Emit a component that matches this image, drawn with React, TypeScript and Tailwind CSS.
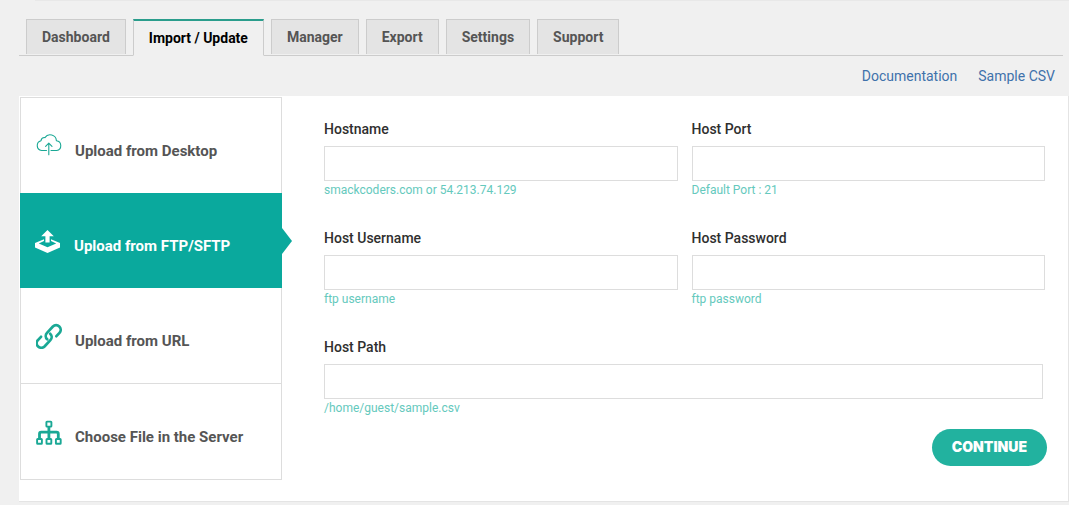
import React, { useState } from "react";

const tabs = ["Dashboard", "Import / Update", "Manager", "Export", "Settings", "Support"];

function CloudIcon() {
  return (
    <svg viewBox="0 0 26 26" className="size-[26px]" fill="none" stroke="currentColor" strokeWidth="1.1" strokeLinecap="round" strokeLinejoin="round" aria-hidden="true">
      <path d="M10.5 17.5H5.6A5 5 0 0 1 5 7.7a3.6 3.6 0 0 1 3.9-3.1 6.3 6.3 0 0 1 11.5 3.2 4.9 4.9 0 0 1 .3 9.7H15" />
      <path d="M12.8 21.7V10.4M9.6 13.4l3.2-3.2 3.2 3.2" />
    </svg>
  );
}

function TrayIcon() {
  return (
    <svg viewBox="0 0 26 26" className="size-[26px]" fill="currentColor" aria-hidden="true">
      <path d="M12.5 2 18.8 8.2H14.6V14.6H10.4V8.2H6.2Z" />
      <path d="M9 11.2V13L3.8 15.4 12.5 19.2 21.2 15.4 16 13V11.2L25 15V19.6L12.5 25 0 19.6V15Z" />
    </svg>
  );
}

function ChainIcon() {
  return (
    <svg viewBox="0 0 26 26" className="size-[26px]" fill="none" stroke="currentColor" strokeWidth="2.7" strokeLinecap="round" strokeLinejoin="round" aria-hidden="true">
      <path d="M11.2 16.3A4.6 4.6 0 0 1 11 9.8L16.9 3.5A4.6 4.6 0 0 1 23.5 9.9L20.4 13.2" />
      <path d="M14.2 10.7A4.6 4.6 0 0 1 14.4 17.2L8.5 23.5A4.6 4.6 0 0 1 1.9 17.1L5 13.8" />
    </svg>
  );
}

function TreeIcon() {
  return (
    <svg viewBox="0 0 26 26" className="size-[26px]" fill="none" stroke="currentColor" strokeWidth="1.9" strokeLinejoin="round" aria-hidden="true">
      <rect x="10.4" y="2.6" width="5" height="5" rx=".6" />
      <rect x="1.1" y="20" width="4.8" height="4.8" rx=".6" />
      <rect x="10.5" y="20" width="4.8" height="4.8" rx=".6" />
      <rect x="19.9" y="20" width="4.8" height="4.8" rx=".6" />
      <path strokeWidth="2.8" d="M12.9 8V19.5M3.5 19.5V14.9Q3.5 13.2 5.2 13.2H20.6Q22.3 13.2 22.3 14.9V19.5" />
    </svg>
  );
}

const sources = [
  { label: "Upload from Desktop", Icon: CloudIcon },
  { label: "Upload from FTP/SFTP", Icon: TrayIcon },
  { label: "Upload from URL", Icon: ChainIcon },
  { label: "Choose File in the Server", Icon: TreeIcon },
];

type FieldProps = { id: string; label: string; hint: string; type?: string };

function Field({ id, label, hint, type = "text" }: FieldProps) {
  return (
    <div className="flex min-w-0 flex-col">
      <label htmlFor={id} className="mb-[7px] text-sm leading-5 font-medium text-[#2f2f2f]">{label}</label>
      <input id={id} type={type} aria-describedby={`${id}-hint`} className="h-[35px] w-full border border-[#dddddd] bg-white px-3 text-sm outline-none focus:border-[#0aa99d]" />
      <p id={`${id}-hint`} className="text-xs leading-[18px] text-[#65c9bd]">{hint}</p>
    </div>
  );
}

export default function App() {
  const [tab, setTab] = useState(1);
  const [source, setSource] = useState(1);

  return (
    <div className="min-h-screen bg-[#f0f0f0] pl-[19px] font-['Roboto',sans-serif]">
      <div className="ml-4 border-t border-[#e8e8e8]" />
      <nav className="mr-1.5 flex items-end gap-[7px] border-b border-[#cccccc] pt-[18px] pl-[7px]">
        {tabs.map((name, i) => (
          <button
            key={name}
            type="button"
            onClick={() => setTab(i)}
            className={
              i === tab
                ? "-mb-px h-[37px] border border-t-2 border-[#cccccc] border-t-[#2a9d8c] border-b-[#f0f0f0] bg-[#f0f0f0] px-[15px] text-sm font-bold text-black"
                : "mb-px h-[35px] border border-b-0 border-[#cccccc] bg-[#e4e4e4] px-[15px] text-sm font-bold text-[#555555]"
            }
          >
            {name}
          </button>
        ))}
      </nav>
      <div className="flex justify-end gap-[21px] py-2.5 pr-3.5 text-sm leading-5 text-[#3f72ab]">
        <a href="#documentation">Documentation</a>
        <a href="#sample-csv">Sample CSV</a>
      </div>
      <main className="flex border-r border-b border-[#e4e4e4] bg-white pt-px pb-[21px] pl-px">
        <aside className="flex w-[262px] shrink-0 flex-col border border-[#dddddd]">
          {sources.map(({ label, Icon }, i) => (
            <button
              key={label}
              type="button"
              onClick={() => setSource(i)}
              className={
                i === source
                  ? "relative -mx-px flex h-[95px] items-center gap-[13px] bg-[#0aa99d] pr-2 pl-[15px] text-left text-[15px] leading-5 font-bold text-white"
                  : "relative flex h-[95px] items-center gap-[13px] border-[#dddddd] pr-2 pl-[15px] text-left text-[15px] leading-5 font-bold text-[#555555] not-first:not-last:h-24 not-first:not-last:border-b"
              }
            >
              <span className={i === source ? "text-white" : "text-[#1aa895]"}><Icon /></span>
              <span className="pt-2.5">{label}</span>
              {i === source && (
                <svg viewBox="0 0 10 26" className="absolute top-1/2 left-full h-[26px] w-2.5 -translate-y-1/2" fill="#0aa99d" aria-hidden="true">
                  <path d="M0 0 10 13 0 26Z" />
                </svg>
              )}
            </button>
          ))}
        </aside>
        <form className="min-w-0 flex-1 pt-[22px] pr-[21px] pl-[42px]" onSubmit={(e) => e.preventDefault()}>
          <div className="grid grid-cols-2 gap-x-3.5 gap-y-[29px] pr-0.5">
            <Field id="hostname" label="Hostname" hint="smackcoders.com or 54.213.74.129" />
            <Field id="port" label="Host Port" hint="Default Port : 21" />
            <Field id="username" label="Host Username" hint="ftp username" />
            <Field id="password" label="Host Password" hint="ftp password" type="password" />
            <div className="col-span-2 pr-0.5">
              <Field id="path" label="Host Path" hint="/home/guest/sample.csv" />
            </div>
          </div>
          <div className="mt-3 flex justify-end">
            <button type="submit" className="h-[37px] rounded-full bg-[#22b29f] px-5 pb-0.5 font-['Inter',sans-serif] text-sm font-black text-white">
              CONTINUE
            </button>
          </div>
        </form>
      </main>
    </div>
  );
}
